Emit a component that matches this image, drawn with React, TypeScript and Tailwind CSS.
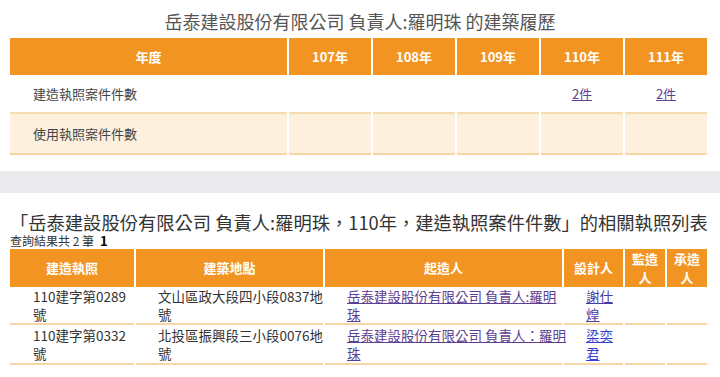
import React from "react";

const font = { fontFamily: '"Noto Sans CJK TC", "Noto Sans", sans-serif' };

export default function App() {
  const years = ["107年", "108年", "109年", "110年", "111年"];
  return (
    <div className="w-[720px] h-[377px] overflow-hidden bg-white text-[#333]" style={font}>
      {/* Title 1 */}
      <div className="pt-[8px] mb-[2px] h-[36px] text-center text-[18px] leading-[26px] text-[#555]">
        岳泰建設股份有限公司 負責人:羅明珠 的建築履歷
      </div>

      {/* Table 1 */}
      <div className="ml-[10px] w-[697px] grid grid-cols-[277px_repeat(5,82px)] gap-x-[2px] text-[13px]">
        <div className="h-[37px] bg-[#f29422] text-white font-bold flex items-center justify-center">年度</div>
        {years.map((y) => (
          <div key={y} className="h-[37px] bg-[#f29422] text-white font-bold flex items-center justify-center">
            {y}
          </div>
        ))}

        <div className="h-[39px] bg-white border-b-2 border-[#f5dcae] flex items-center pl-[23px] text-[#444]">
          建造執照案件件數
        </div>
        <div className="h-[39px] bg-white border-b-2 border-[#f5dcae]" />
        <div className="h-[39px] bg-white border-b-2 border-[#f5dcae]" />
        <div className="h-[39px] bg-white border-b-2 border-[#f5dcae]" />
        <div className="h-[39px] bg-white border-b-2 border-[#f5dcae] flex items-center justify-center">
          <a href="#" className="underline text-[#5d3f91]">2件</a>
        </div>
        <div className="h-[39px] bg-white border-b-2 border-[#f5dcae] flex items-center justify-center">
          <a href="#" className="underline text-[#5d3f91]">2件</a>
        </div>

        <div className="h-[41px] bg-[#fef0df] border-b-2 border-[#f5d6a4] flex items-center pl-[23px] text-[#444]">
          使用執照案件件數
        </div>
        <div className="h-[41px] bg-[#fef0df] border-b-2 border-[#f5d6a4]" />
        <div className="h-[41px] bg-[#fef0df] border-b-2 border-[#f5d6a4]" />
        <div className="h-[41px] bg-[#fef0df] border-b-2 border-[#f5d6a4]" />
        <div className="h-[41px] bg-[#fef0df] border-b-2 border-[#f5d6a4]" />
        <div className="h-[41px] bg-[#fef0df] border-b-2 border-[#f5d6a4]" />
      </div>

      {/* Gray band */}
      <div className="mt-[16px] h-[22px] bg-[#eaeaec]" />

      {/* Title 2 */}
      <div className="mt-[18px] ml-[10px] h-[22px] text-[18.3px] leading-[22px] text-[#333] whitespace-nowrap">
        「岳泰建設股份有限公司 負責人:羅明珠，110年，建造執照案件件數」的相關執照列表
      </div>
      <div className="ml-[10px] h-[16px] text-[12px] leading-[16px] text-[#333] flex items-baseline">
        <span>查詢結果共 2 筆</span>
        <span className="ml-[6px] text-[13px] font-bold text-black">1</span>
      </div>

      {/* Table 2 */}
      <div className="ml-[10px] w-[697px] grid grid-cols-[124px_187px_237px_59px_40px_40px] gap-x-[2px] text-[13.5px] leading-[18px] whitespace-nowrap">
        {["建造執照", "建築地點", "起造人", "設計人"].map((h) => (
          <div key={h} className="h-[38px] bg-[#f29422] text-white font-bold text-[13px] flex items-center justify-center">
            {h}
          </div>
        ))}
        <div className="h-[38px] bg-[#f29422] text-white font-bold text-[13px] leading-[19px] flex items-center justify-center text-center">
          監造<br />人
        </div>
        <div className="h-[38px] bg-[#f29422] text-white font-bold text-[13px] leading-[19px] flex items-center justify-center text-center">
          承造<br />人
        </div>

        {/* Row 1 */}
        <div className="h-[38px] border-b-2 border-[#f5d6a4] pl-[23px]">
          110建字第0289<br />號
        </div>
        <div className="h-[38px] border-b-2 border-[#f5d6a4] pl-[22px]">
          文山區政大段四小段0837地<br />號
        </div>
        <div className="h-[38px] border-b-2 border-[#f5d6a4] pl-[22px]">
          <a href="#" className="underline text-[#5d3f91]">
            岳泰建設股份有限公司 負責人:羅明<br />珠
          </a>
        </div>
        <div className="h-[38px] border-b-2 border-[#f5d6a4] pl-[22px]">
          <a href="#" className="underline text-[#4b3a9e]">
            謝仕<br />煌
          </a>
        </div>
        <div className="h-[38px] border-b-2 border-[#f5d6a4]" />
        <div className="h-[38px] border-b-2 border-[#f5d6a4]" />

        {/* Row 2 */}
        <div className="h-[39px] mt-[1px] border-b-2 border-[#f5d6a4] pl-[23px]">
          110建字第0332<br />號
        </div>
        <div className="h-[39px] mt-[1px] border-b-2 border-[#f5d6a4] pl-[22px]">
          北投區振興段三小段0076地<br />號
        </div>
        <div className="h-[39px] mt-[1px] border-b-2 border-[#f5d6a4] pl-[22px]">
          <a href="#" className="underline text-[#5d3f91]">
            岳泰建設股份有限公司 負責人：羅明<br />珠
          </a>
        </div>
        <div className="h-[39px] mt-[1px] border-b-2 border-[#f5d6a4] pl-[22px]">
          <a href="#" className="underline text-[#3a3fcf]">
            梁奕<br />君
          </a>
        </div>
        <div className="h-[39px] mt-[1px] border-b-2 border-[#f5d6a4]" />
        <div className="h-[39px] mt-[1px] border-b-2 border-[#f5d6a4]" />
      </div>
    </div>
  );
}
